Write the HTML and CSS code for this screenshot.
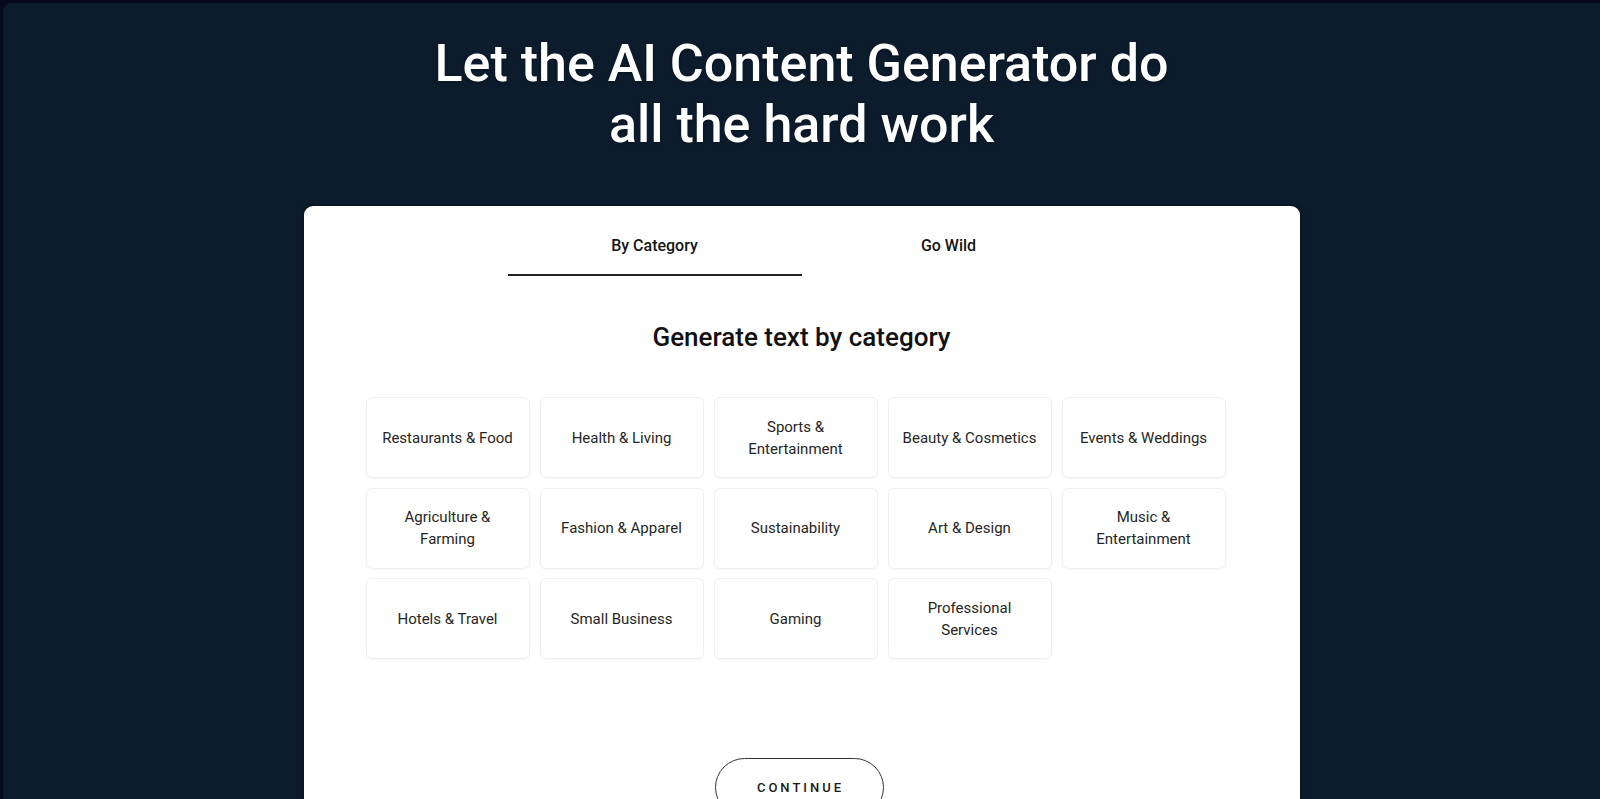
FILE: index.html
```html
<!DOCTYPE html>
<html lang="en">
<head>
<meta charset="utf-8">
<title>AI Content Generator</title>
<link rel="stylesheet" href="styles.css">
</head>
<body>
<div class="frame">
  <h1 class="hero-title">Let the AI Content Generator do<br>all the hard work</h1>
  <section class="card">
    <nav class="tabs">
      <div class="tab tab-active">By Category</div>
      <div class="tab">Go Wild</div>
    </nav>
    <h2 class="card-title">Generate text by category</h2>
    <div class="grid">
      <div class="cat">Restaurants &amp; Food</div>
      <div class="cat">Health &amp; Living</div>
      <div class="cat">Sports &amp; Entertainment</div>
      <div class="cat">Beauty &amp; Cosmetics</div>
      <div class="cat">Events &amp; Weddings</div>
      <div class="cat">Agriculture &amp; Farming</div>
      <div class="cat">Fashion &amp; Apparel</div>
      <div class="cat">Sustainability</div>
      <div class="cat">Art &amp; Design</div>
      <div class="cat">Music &amp; Entertainment</div>
      <div class="cat">Hotels &amp; Travel</div>
      <div class="cat">Small Business</div>
      <div class="cat">Gaming</div>
      <div class="cat">Professional Services</div>
    </div>
    <div class="actions">
      <button class="continue">CONTINUE</button>
    </div>
  </section>
</div>
</body>
</html>
```

FILE: styles.css
```css
html, body {
  margin: 0;
  padding: 0;
  background: #060a1a;
  overflow: hidden;
}

.frame {
  margin: 3px 0 0 3px;
  height: 796px;
  background: #0c1c2d;
  border-top-left-radius: 8px;
  padding-top: 30px;
  box-sizing: border-box;
  overflow: hidden;
  font-family: Roboto, "Liberation Sans", sans-serif;
}

.hero-title {
  margin: 0;
  text-align: center;
  color: #ffffff;
  font-size: 52px;
  line-height: 61px;
  font-weight: 500;
  text-shadow: 0 1px 3px rgba(0, 0, 0, 0.35);
}

.card {
  width: 996px;
  margin: 51px auto 0;
  background: #ffffff;
  border-radius: 9px;
  padding: 30px 0 60px;
  box-shadow: 0 0 4px rgba(0, 0, 0, 0.6);
  box-sizing: border-box;
}

.tabs {
  display: flex;
  justify-content: center;
}

.tab {
  width: 294px;
  text-align: center;
  font-size: 16px;
  line-height: 20px;
  font-weight: 500;
  color: #151515;
  padding-bottom: 18px;
  border-bottom: 2px solid transparent;
}

.tab-active {
  border-bottom-color: #222222;
}

.card-title {
  margin: 45px 0 0;
  text-align: center;
  font-size: 26px;
  line-height: 32px;
  font-weight: 500;
  color: #111111;
}

.grid {
  margin-top: 44px;
  display: grid;
  grid-template-columns: repeat(5, 164px);
  grid-auto-rows: 81px;
  gap: 9.5px 10px;
  justify-content: center;
  padding-right: 12px;
}

.cat {
  display: flex;
  align-items: center;
  justify-content: center;
  text-align: center;
  padding: 0 12px;
  border: 1px solid #efefef;
  border-radius: 6px;
  box-shadow: 0 1px 2px rgba(0, 0, 0, 0.04);
  font-size: 15px;
  line-height: 22px;
  color: #262626;
}

.actions {
  margin-top: 99px;
  display: flex;
  justify-content: center;
}

.continue {
  width: 169px;
  height: 59px;
  margin-right: 5px;
  border: 1px solid #333333;
  border-radius: 30px;
  background: #ffffff;
  font-family: Roboto, "Liberation Sans", sans-serif;
  font-size: 13px;
  font-weight: 500;
  letter-spacing: 3px;
  color: #1a1a1a;
  padding: 0 0 0 3px;
}
```
